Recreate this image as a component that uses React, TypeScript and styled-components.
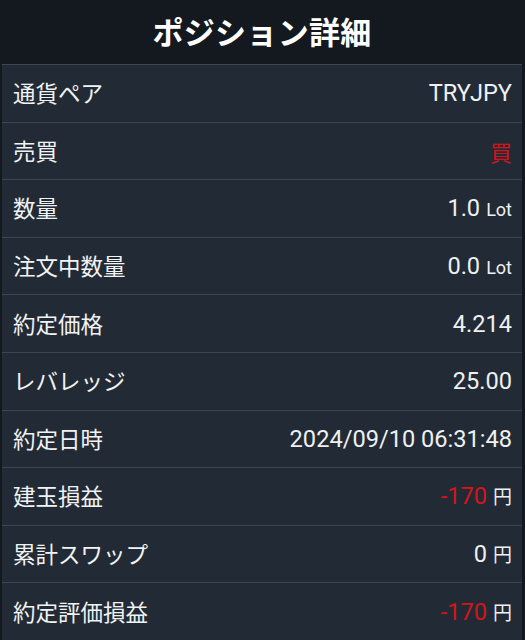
import React from 'react';
import styled, { createGlobalStyle } from 'styled-components';

const GlobalStyle = createGlobalStyle`
  html, body {
    margin: 0;
    padding: 0;
    background: #10141a;
  }
  body {
    font-family: Roboto, "Noto Sans CJK JP", sans-serif;
  }
`;

const Screen = styled.div`
  width: 525px;
  height: 640px;
  display: flex;
  flex-direction: column;
  background: #141920;
  box-sizing: border-box;
  padding: 0 3px 0 2px;
  overflow: hidden;
`;

const Header = styled.div`
  height: 64px;
  flex: none;
  display: flex;
  align-items: center;
  justify-content: center;
  background: #141920;
  color: #ffffff;
  font-family: "Noto Sans CJK JP", sans-serif;
  font-weight: 700;
  font-size: 31px;
  letter-spacing: 0.3px;
  padding-bottom: 4px;
  box-sizing: border-box;
`;

const List = styled.div`
  flex: 1;
  display: flex;
  flex-direction: column;
  border-top: 1px solid #3b4753;
`;

const Row = styled.div`
  flex: 1;
  display: flex;
  align-items: center;
  justify-content: space-between;
  padding: 0 10px 0 11px;
  background: #222b35;
  border-bottom: 1px solid #3a4550;
  &:last-child {
    border-bottom: none;
  }
`;

const Label = styled.div`
  color: #f0f2f4;
  font-family: "Noto Sans CJK JP", sans-serif;
  font-size: 22.5px;
  padding-bottom: 2px;
`;

const Value = styled.div`
  display: flex;
  align-items: baseline;
  gap: 6px;
  color: #eef0f2;
  font-family: Roboto, "Noto Sans CJK JP", sans-serif;
  font-size: 23.6px;
`;

const Num = styled.span<{ $red?: boolean }>`
  color: ${({ $red }) => ($red ? '#d3141b' : '#eef0f2')};
`;

const Unit = styled.span<{ $cjk?: boolean }>`
  color: #eef0f2;
  font-size: ${({ $cjk }) => ($cjk ? '19px' : '18px')};
  font-family: ${({ $cjk }) => ($cjk ? '"Noto Sans CJK JP", sans-serif' : 'Roboto, sans-serif')};
`;

const RedKanji = styled.span`
  color: #d3141b;
  font-family: "Noto Sans CJK JP", sans-serif;
  font-size: 22px;
`;

interface item {
  label: string;
  value: React.ReactNode;
}

const items: item[] = [
  { label: '通貨ペア', value: 'TRYJPY' },
  { label: '売買', value: <RedKanji>買</RedKanji> },
  { label: '数量', value: <><Num>1.0</Num><Unit>Lot</Unit></> },
  { label: '注文中数量', value: <><Num>0.0</Num><Unit>Lot</Unit></> },
  { label: '約定価格', value: '4.214' },
  { label: 'レバレッジ', value: '25.00' },
  { label: '約定日時', value: '2024/09/10 06:31:48' },
  { label: '建玉損益', value: <><Num $red>-170</Num><Unit $cjk>円</Unit></> },
  { label: '累計スワップ', value: <><Num>0</Num><Unit $cjk>円</Unit></> },
  { label: '約定評価損益', value: <><Num $red>-170</Num><Unit $cjk>円</Unit></> },
];

const App = () => (
  <>
    <GlobalStyle />
    <Screen>
      <Header>ポジション詳細</Header>
      <List>
        {items.map((it) => (
          <Row key={it.label}>
            <Label>{it.label}</Label>
            <Value>{it.value}</Value>
          </Row>
        ))}
      </List>
    </Screen>
  </>
);

export default App;
